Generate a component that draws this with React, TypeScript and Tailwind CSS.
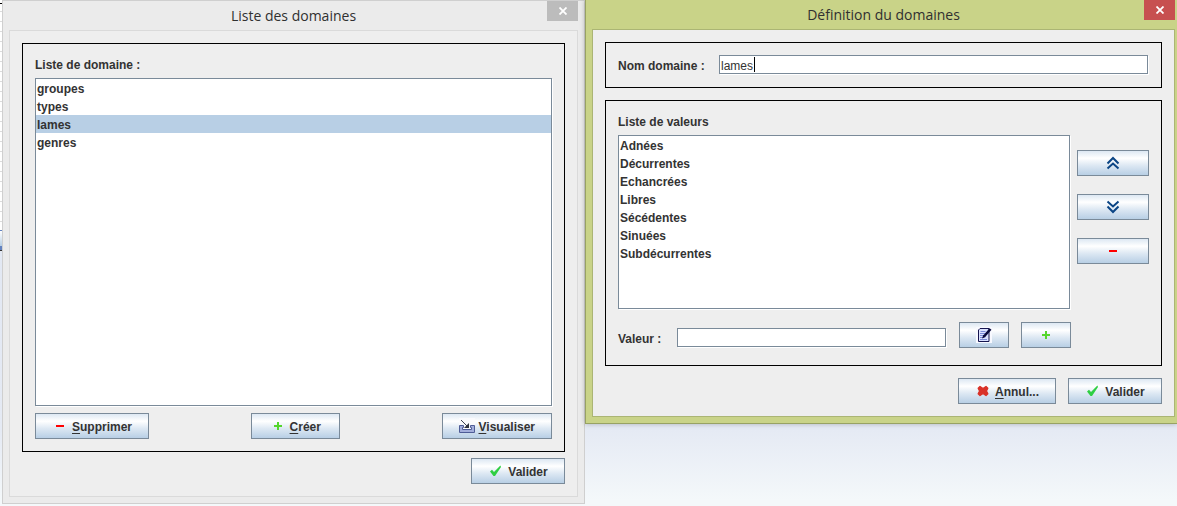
import { useState } from "react";
import type { ReactNode } from "react";

const buttonClass =
  "flex h-[26px] items-center justify-center gap-1 border border-[#7a8a99] bg-[linear-gradient(#dde8f3_0%,#ffffff_30%,#dde8f3_60%,#b8cfe5_100%)] px-4 text-xs font-bold whitespace-nowrap active:bg-none active:bg-[#b8cfe5]";
const fieldClass =
  "h-[19px] w-full border border-[#7a8a99] bg-white px-px pt-0.5 text-xs shadow-[1px_1px_0_#ffffff] outline-none";

function Icon({ children }: { children: ReactNode }) {
  return (
    <svg className="size-4 shrink-0" viewBox="0 0 16 16" fill="none" aria-hidden="true">
      {children}
    </svg>
  );
}

const MinusIcon = () => (
  <Icon>
    <path d="M4 7h8v2H4z" fill="#ff0000" shapeRendering="crispEdges" />
  </Icon>
);

const PlusIcon = () => (
  <Icon>
    <path d="M7 4h2v3h3v2H9v3H7V9H4V7h3z" fill="#55d62c" shapeRendering="crispEdges" />
  </Icon>
);

const CheckIcon = () => (
  <Icon>
    <path d="M2 8.5 4 6.800l2 2.2L12.4 2.500 13 4 7 13H5.500z" fill="#2fcf43" />
  </Icon>
);

const CrossIcon = () => (
  <Icon>
    <path
      d="M5 3.500 8 5.500l3-2L12.800 5.200 11.400 8l1.400 2.800L11 12.500l-3-2-3 2-1.800-1.700L4.600 8 3.200 5.200z"
      fill="#d93229"
      stroke="#d93229"
      strokeWidth="1.400"
      strokeLinejoin="round"
    />
  </Icon>
);

const ChevronsIcon = ({ down = false }: { down?: boolean }) => (
  <Icon>
    <path
      d={down ? "M2.500 2.500l5.500 5 5.500-5M2.500 7.500l5.500 5.500 5.500-5.500" : "M2.500 8.500l5.500-5.500 5.500 5.500M2.500 13.500l5.500-5 5.500 5"}
      stroke="#0b4585"
      strokeWidth="2"
    />
  </Icon>
);

const TrayIcon = () => (
  <Icon>
    <path d="M0 0h16v15H0z" fill="#fafafd" fillOpacity=".85" />
    <path d="M.5 7.500h4v2h-1v2h9v-2h-1v-2h4v7H.5z" fill="#a3aedb" stroke="#4e5c96" />
    <path d="M2 2l7 7" stroke="#3c4150" />
    <path d="M10 5v5H5z" fill="#30343f" />
  </Icon>
);

const EditIcon = () => (
  <Icon>
    <path d="M0 0h16v16H0z" fill="#f8f9ff" />
    <path d="M4 1.500h9v13H2.500V3z" fill="#dce2ff" stroke="#15154f" />
    <path d="M4.500 4.500h5M4 6.500h5M4 8.500h3M4 10.500h4M4 12.500h7" stroke="#7c8bd8" />
    <path d="M14.500 2 8 9.500" stroke="#08083c" strokeWidth="2.600" />
    <path d="M7.400 7.800 6 11.500 9.500 10z" fill="#08083c" />
  </Icon>
);

function CloseButton({ color }: { color: string }) {
  return (
    <button
      type="button"
      aria-label="Fermer"
      className={`absolute top-0 flex h-5 w-[31px] items-center justify-center ${color}`}
    >
      <svg className="h-2 w-2" viewBox="0 0 8 8" aria-hidden="true">
        <path d="M.5.500l7 7M7.500.500l-7 7" stroke="#ffffff" strokeWidth="1.800" />
      </svg>
    </button>
  );
}

function ListBox({
  labelId,
  items,
  initial,
  height,
}: {
  labelId: string;
  items: string[];
  initial?: string;
  height: string;
}) {
  const [selected, setSelected] = useState(initial);
  return (
    <ul
      role="listbox"
      aria-labelledby={labelId}
      className={`overflow-auto border border-[#7a8a99] bg-white shadow-[1px_1px_0_#ffffff] ${height}`}
    >
      {items.map((item) => (
        <li
          key={item}
          role="option"
          aria-selected={item === selected}
          onClick={() => setSelected(item)}
          className={`px-px pt-0.5 text-xs leading-4 font-bold ${item === selected ? "bg-[#b8cfe5]" : ""}`}
        >
          {item}
        </li>
      ))}
    </ul>
  );
}

const Mnemonic = ({ children }: { children: string }) => (
  <span className="pt-0.5">
    <span className="underline decoration-1 underline-offset-2">{children.charAt(0)}</span>
    {children.slice(1)}
  </span>
);

const titleClass = "text-center font-['Open_Sans',sans-serif] text-sm text-[#303030]";

function DomainListDialog() {
  return (
    <section className="relative min-w-0 border border-[#cfcfcf] bg-[#ebebeb] px-1.5 pb-1.5">
      <CloseButton color="right-1.5 bg-[#bcbcbc]" />
      <h1 className={`h-[29px] leading-[30px] ${titleClass}`}>Liste des domaines</h1>
      <div className="border border-[#dadada] bg-[#eeeeee] p-3">
        <div className="border border-black p-3">
          <h2 id="domains-label" className="mb-1 text-xs leading-[18px] font-bold">
            Liste de domaine :
          </h2>
          <ListBox
            labelId="domains-label"
            items={["groupes", "types", "lames", "genres"]}
            initial="lames"
            height="h-[328px]"
          />
          <div className="mt-[7px] flex justify-between">
            <button type="button" className={buttonClass}>
              <MinusIcon />
              <Mnemonic>Supprimer</Mnemonic>
            </button>
            <button type="button" className={`min-w-[89px] ${buttonClass}`}>
              <PlusIcon />
              <Mnemonic>Créer</Mnemonic>
            </button>
            <button type="button" className={buttonClass}>
              <TrayIcon />
              <Mnemonic>Visualiser</Mnemonic>
            </button>
          </div>
        </div>
        <div className="mt-1.5 flex justify-end">
          <button type="button" className={`min-w-[94px] ${buttonClass}`}>
            <CheckIcon />
            <span className="pt-0.5">Valider</span>
          </button>
        </div>
      </div>
    </section>
  );
}

function DomainDefinitionDialog() {
  const [name, setName] = useState("lames");
  const [value, setValue] = useState("");
  return (
    <section className="relative min-w-0 border-b border-l border-[#98a263] bg-[#c9d388] pr-0.5 pb-1.5 pl-1.5 shadow-[0_0_5px_rgba(0,0,0,0.25)]">
      <CloseButton color="right-0.5 bg-[#c75050]" />
      <h1 className={`h-[29px] leading-[29px] ${titleClass}`}>Définition du domaines</h1>
      <div className="border border-[#abb574] bg-[#eeeeee] p-3">
        <div className="flex items-center border border-black px-3 pt-3 pb-[13px]">
          <label htmlFor="domain-name" className="w-[101px] shrink-0 pt-0.5 text-xs font-bold">
            Nom domaine :
          </label>
          <div className="relative mr-px flex flex-1">
            <input
              id="domain-name"
              value={name}
              onChange={(event) => setName(event.target.value)}
              className={`${fieldClass} caret-transparent`}
            />
            <span className="absolute top-0.5 left-[35px] h-[15px] w-px bg-black" />
          </div>
        </div>

        <div className="mt-3 border border-black px-3 pt-3 pb-[17px]">
          <div className="flex gap-[7px]">
            <div className="flex-1">
              <h2 id="values-label" className="mb-1 text-xs leading-[18px] font-bold">
                Liste de valeurs
              </h2>
              <ListBox
                labelId="values-label"
                items={[
                  "Adnées",
                  "Décurrentes",
                  "Echancrées",
                  "Libres",
                  "Sécédentes",
                  "Sinuées",
                  "Subdécurrentes",
                ]}
                height="h-[174px]"
              />
            </div>
            <div className="flex w-[72px] flex-col gap-[18px] pt-[37px]">
              <button type="button" aria-label="Monter" className={buttonClass}>
                <ChevronsIcon />
              </button>
              <button type="button" aria-label="Descendre" className={buttonClass}>
                <ChevronsIcon down />
              </button>
              <button type="button" aria-label="Supprimer la valeur" className={buttonClass}>
                <MinusIcon />
              </button>
            </div>
          </div>
          <div className="mt-[13px] mr-[78px] flex items-center">
            <label htmlFor="value" className="mt-2 w-[59px] shrink-0 text-xs font-bold">
              Valeur :
            </label>
            <input
              id="value"
              value={value}
              onChange={(event) => setValue(event.target.value)}
              className={`mt-[5px] mr-[13px] min-w-0 flex-1 ${fieldClass}`}
            />
            <button type="button" aria-label="Modifier la valeur" className={`mr-3 ${buttonClass}`}>
              <EditIcon />
            </button>
            <button type="button" aria-label="Ajouter la valeur" className={buttonClass}>
              <PlusIcon />
            </button>
          </div>
        </div>

        <div className="mt-3 flex justify-end gap-3">
          <button type="button" className={buttonClass}>
            <CrossIcon />
            <Mnemonic>Annul...</Mnemonic>
          </button>
          <button type="button" className={`min-w-[94px] ${buttonClass}`}>
            <CheckIcon />
            <span className="pt-0.5">Valider</span>
          </button>
        </div>
      </div>
    </section>
  );
}

export default function App() {
  return (
    <main className="grid min-h-screen grid-cols-[2px_583fr_592fr] items-start bg-[linear-gradient(#dfe6f2_0px,#e5eaf4_430px,#f4f8fa_500px)] font-['Liberation_Sans',Arial,sans-serif] text-[#333333]">
      <div className="flex flex-col">
        <div className="h-[3px] bg-white" />
        <div className="h-px bg-black" />
        <div className="h-[226px] bg-[repeating-linear-gradient(#ffffff_0px,#ffffff_7px,#dcdcdc_7px,#dcdcdc_8px,#ffffff_8px,#ffffff_10px)]" />
        <div className="h-[17px] border-y border-[#6382bf] bg-[linear-gradient(#ffffff,#b8cfe5)]" />
        <div className="h-1 border-b border-[#333333] bg-[#6382bf]" />
      </div>
      <DomainListDialog />
      <DomainDefinitionDialog />
    </main>
  );
}
